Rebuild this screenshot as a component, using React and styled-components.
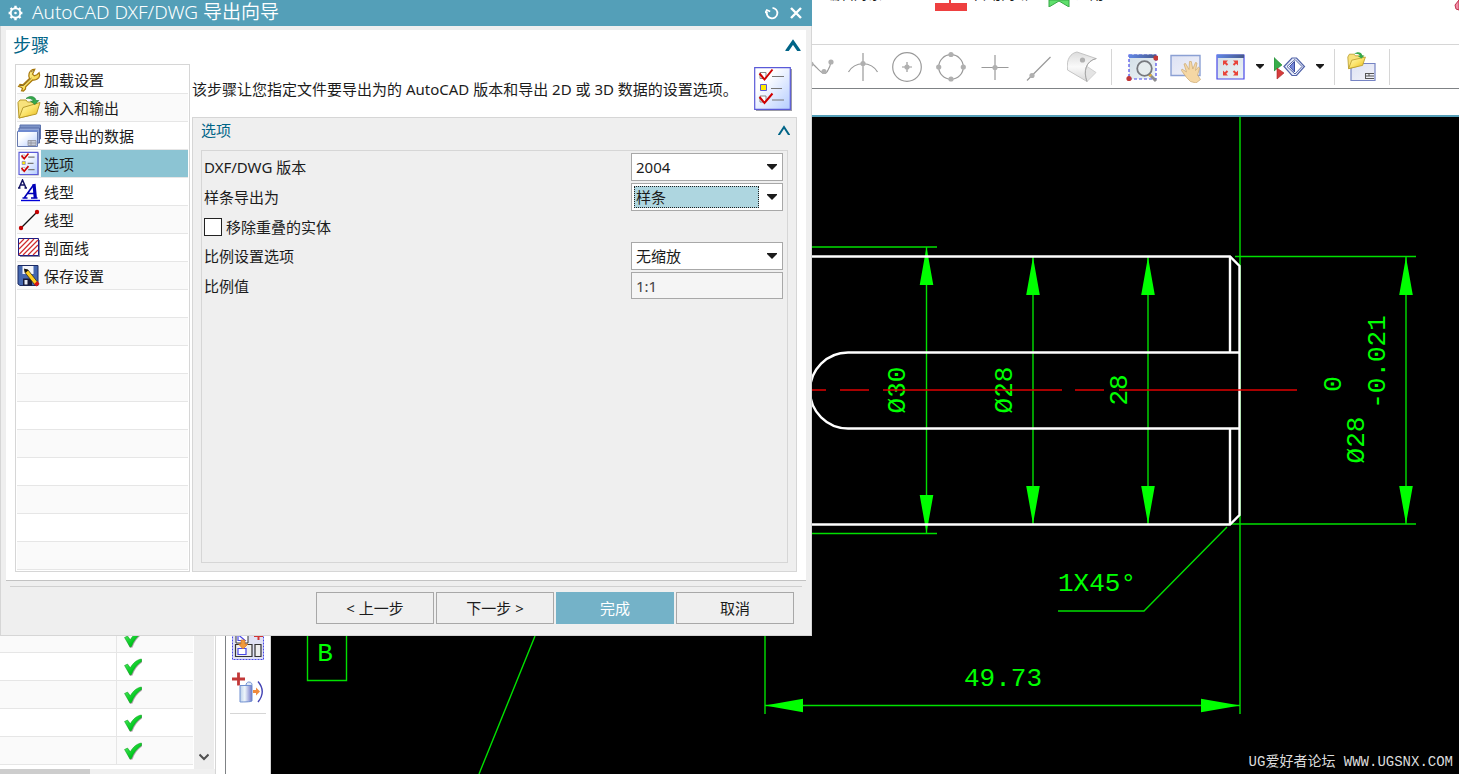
import React from "react";
import styled, { createGlobalStyle, css } from "styled-components";

const ui = '"Noto Sans", "Noto Sans CJK SC", sans-serif';
const teal = "#549fb8";
const heading = "#006487";

const Global = createGlobalStyle`
  *, *::before, *::after { box-sizing: border-box; }
  body { margin: 0; background: #fff; color: #1c1c1c; font: 15px/20px ${ui}; }
  button, input, select { font: inherit; color: inherit; }
  svg { display: block; flex: none; }
`;

/* ---------- application frame ---------- */

const App_ = styled.div`
  position: relative;
  display: flex;
  flex-direction: column;
  height: 100vh;
  min-height: 640px;
  overflow: hidden;
`;

const Ribbon = styled.header`
  display: flex;
  align-items: flex-start;
  height: 44px;
  padding-left: 826px;
  overflow: hidden;
  flex: none;
`;

const RibbonItem = styled.button`
  display: flex;
  align-items: flex-start;
  gap: 6px;
  padding: 0;
  margin-right: ${(p) => p.$after || 0}px;
  border: 0;
  background: none;
  font-size: 14px;
  white-space: nowrap;
  flex: none;
  span { margin-top: -16px; }
`;

const RibbonEnd = styled.div`
  margin-left: auto;
`;

const Toolbar = styled.div`
  display: flex;
  align-items: center;
  height: 45px;
  padding-left: 797px;
  border-top: 1px solid #d6d6d6;
  border-bottom: 1px solid #7f8285;
  flex: none;
`;

const ToolGroup = styled.div`
  display: flex;
  align-items: center;
  padding-left: ${(p) => p.$lead || 0}px;
`;

const Tool = styled.button`
  display: grid;
  place-items: center;
  width: ${(p) => (p.$narrow ? 16 : 44)}px;
  height: 44px;
  padding: 0;
  border: 0;
  background: none;
  flex: none;
`;

const Divider = styled.div`
  width: 1px;
  height: 36px;
  margin: 0 4px 0 6px;
  background: #d6d6d6;
  flex: none;
`;

const Workspace = styled.div`
  display: flex;
  flex: 1;
  min-height: 0;
`;

const TreePanel = styled.aside`
  display: flex;
  flex-direction: column;
  width: 216px;
  border-right: 1px solid #d6d6d6;
  flex: none;
`;

const TreeBody = styled.div`
  display: flex;
  flex: 1;
  min-height: 0;
`;

const TreeClip = styled.div`
  display: flex;
  flex-direction: column;
  justify-content: flex-end;
  width: 194px;
  padding-bottom: 4px;
  overflow: hidden;
`;

const TreeTable = styled.table`
  width: 193px;
  border-collapse: separate;
  border-spacing: 0;
  table-layout: fixed;
  flex: none;
  td { height: 28px; padding: 0; border-bottom: 1px solid #e6e6e6; }
  td:first-child { width: 117px; border-right: 1px solid #e6e6e6; }
  td:last-child { padding-left: 6px; }
  tr:nth-child(even) td { background: #fafafa; }
`;

const VScroll = styled.div`
  display: flex;
  align-items: flex-end;
  justify-content: center;
  width: 20px;
  padding-bottom: 7px;
  background: #ededed;
`;

const HScroll = styled.div`
  height: 5px;
  background: #f0f0f0;
  flex: none;
`;

const HThumb = styled.div`
  width: 90px;
  height: 5px;
  background: #cdcdcd;
`;

const SideTools = styled.div`
  display: flex;
  flex-direction: column;
  justify-content: flex-end;
  width: 46px;
  margin-left: 9px;
  padding: 0 0 60px;
  border-left: 1px solid #7f8285;
  border-right: 1px solid #d6d6d6;
  overflow: hidden;
  flex: none;
`;

const SideRule = styled.div`
  height: 1px;
  margin: 3px 4px 0;
  background: #d6d6d6;
  flex: none;
`;

const Viewport = styled.main`
  display: flex;
  flex-direction: column;
  flex: 1;
  min-width: 0;
`;

const ViewTabs = styled.div`
  height: 28px;
  border-bottom: 2px solid ${teal};
  flex: none;
`;

const Canvas = styled.div`
  flex: 1;
  min-height: 0;
  background: #000;
  > svg { width: 100%; height: 100%; }
`;

/* ---------- dialog ---------- */

const Dialog = styled.section`
  position: absolute;
  top: 0;
  left: 0;
  width: min(812px, 100%);
  border: 1px solid #d6d6d6;
  border-top: 0;
  background: #efefef;
`;

const TitleBar = styled.header`
  display: flex;
  align-items: center;
  height: 26px;
  margin: 0 -1px;
  padding: 0 4px 0 8px;
  background: ${teal};
  color: #fff;
`;

const Title = styled.h1`
  flex: 1;
  margin: 0 0 0 9px;
  font-size: 19px;
  line-height: 24px;
  padding-bottom: 2px;
  font-weight: 350;
`;

const BarButton = styled.button`
  display: grid;
  place-items: center;
  width: 24px;
  height: 24px;
  padding: 0;
  border: 0;
  background: none;
`;

const Panel = styled.div`
  margin: 4px 5px 0;
  padding: 0 9px 8px;
  border-bottom: 1px solid #c2c2c2;
  background: #fff;
`;

const PanelHead = styled.div`
  display: flex;
  align-items: center;
  justify-content: space-between;
  height: 34px;
  margin: 0 -4px 0 -2px;
  padding-bottom: 5px;
`;

const PanelTitle = styled.h2`
  margin: 0;
  color: ${heading};
  font-size: ${(p) => (p.$small ? 15 : 18)}px;
  line-height: 24px;
  font-weight: 400;
`;

const Fold = styled.button`
  padding: 0;
  border: 0;
  background: none;
`;

const Columns = styled.div`
  display: flex;
  gap: 2px;
`;

const StepList = styled.ol`
  width: 175px;
  margin: 0;
  padding: 1px;
  border: 1px solid #d6d6d6;
  list-style: none;
  flex: none;
`;

const Step = styled.li`
  height: 28px;
  border-bottom: 1px solid #e6e6e6;
  background: ${(p) => (p.$alt ? "#fafafa" : "#fff")};
`;

const StepButton = styled.button`
  display: flex;
  align-items: center;
  width: 100%;
  height: 27px;
  padding: 0;
  border: 0;
  background: none;
  text-align: left;
  span {
    flex: 1;
    padding: 2px 0 0 3px;
    line-height: 25px;
    ${(p) => p.$current && css`background: #8cc4d3;`}
  }
`;

const Detail = styled.div`
  display: flex;
  flex-direction: column;
  flex: 1;
  min-width: 0;
`;

const Intro = styled.div`
  display: flex;
  align-items: center;
  justify-content: space-between;
  height: 53px;
  padding: 0 5px 4px 0;
  p { margin: 0; white-space: nowrap; }
`;

const Options = styled.div`
  display: flex;
  flex-direction: column;
  flex: 1;
  padding: 0 8px 8px;
  border: 1px solid #d6d6d6;
  background: #efefef;
`;

const OptionsHead = styled.div`
  display: flex;
  align-items: center;
  justify-content: space-between;
  height: 32px;
  margin-right: -2px;
  padding-bottom: 8px;
`;

const Fields = styled.div`
  display: flex;
  flex-direction: column;
  gap: 2px;
  flex: 1;
  padding: 2px 4px 2px 2px;
  border: 1px solid #d6d6d6;
`;

const Field = styled.div`
  display: flex;
  align-items: center;
  justify-content: space-between;
  height: ${(p) => (p.$tight ? 27 : 28)}px;
`;

const SelectBox = styled.div`
  display: flex;
  align-items: center;
  width: 152px;
  height: 28px;
  padding: 2px 5px 2px 2px;
  border: 1px solid #a8a8a8;
  background: #fff;
`;

const Select = styled.select`
  appearance: none;
  flex: 1;
  min-width: 0;
  height: 22px;
  margin-right: 8px;
  padding: 0 1px;
  border: 1px dotted ${(p) => (p.$active ? "#222" : "transparent")};
  border-radius: 0;
  background: ${(p) => (p.$active ? "#aed6e0" : "#fff")};
  line-height: 20px;
  outline: 0;
`;

const ValueInput = styled.input`
  width: 152px;
  height: 27px;
  padding: 0 4px;
  border: 1px solid #a8a8a8;
  border-radius: 0;
  background: #f5f5f5;
  color: #444;
`;

const CheckLabel = styled.label`
  display: flex;
  align-items: center;
  gap: 4px;
`;

const Check = styled.input`
  appearance: none;
  width: 18px;
  height: 18px;
  margin: 0;
  border: 1px solid #222;
  background: #fff;
`;

const Footer = styled.footer`
  display: flex;
  justify-content: flex-end;
  gap: 2px;
  margin: 5px 9px 0;
  padding: 5px 8px 11px 0;
  border-top: 1px solid #d0d0d0;
`;

const Button = styled.button`
  width: 118px;
  height: 32px;
  padding: 0;
  border: 1px solid ${(p) => (p.$primary ? "#74b2c8" : "#a8a8a8")};
  background: ${(p) => (p.$primary ? "#74b2c8" : "#efefef")};
  color: ${(p) => (p.$primary ? "#fff" : "#1c1c1c")};
`;

/* ---------- icons ---------- */

const Gear = () => (
  <svg width="15" height="16" viewBox="0 0 15 16" fill="none" stroke="#fff">
    <circle cx="7.500" cy="8" r="4.800" strokeWidth="2" />
    <circle cx="7.500" cy="8" r="1.300" fill="#fff" stroke="none" />
    <path strokeWidth="2.400" d="M7.500 .8V3M7.500 13v2.200M.6 8h2M12.400 8h2M2.600 3l1.500 1.500M11 11.500l1.500 1.500M12.500 3 11 4.500M4 11.500 2.500 13" />
  </svg>
);

const Reset = () => (
  <svg width="14" height="14" viewBox="0 0 14 14" fill="none" stroke="#fff" strokeWidth="1.800">
    <path d="M7.500 1.800A5.300 5.300 0 1 1 2 5.500" />
    <path d="M0 7 1.800 4 5.200 5.500" strokeWidth="1.500" />
  </svg>
);

const Close = () => (
  <svg width="12" height="12" viewBox="0 0 12 12" stroke="#fff" strokeWidth="2.400">
    <path d="M1 1l10 10M11 1 1 11" />
  </svg>
);

const Chevron = ({ small }) => small ? (
  <svg width="12" height="10" viewBox="0 0 12 10" fill="none" stroke={heading} strokeWidth="2">
    <path d="M.5 10.500 6 2l5.500 8.500" />
  </svg>
) : (
  <svg width="16" height="12" viewBox="0 0 16 12" fill="none" stroke={heading} strokeWidth="3.200">
    <path d="M1.500 12.500 8 3l6.500 9.500" />
  </svg>
);

const Caret = ({ small }) => (
  <svg width={small ? 8 : 10} height={small ? 5 : 6} viewBox="0 0 10 6" fill="#1c1c1c">
    <path d="M0 0h10v1L5 6 0 1z" />
  </svg>
);

const Defs = () => (
  <svg width="0" height="0" style={{ position: "absolute" }} aria-hidden="true">
    <defs>
      <linearGradient id="gold" x1="0" y1="0" x2="1" y2="1">
        <stop offset="0" stopColor="#fffbc0" />
        <stop offset=".5" stopColor="#fbe36a" />
        <stop offset="1" stopColor="#e6b410" />
      </linearGradient>
      <linearGradient id="sheet" x1="0" y1="0" x2="1" y2="1">
        <stop offset=".3" stopColor="#fff" />
        <stop offset="1" stopColor="#b4ccff" />
      </linearGradient>
      <linearGradient id="paper" x1="0" y1="0" x2="1" y2="1">
        <stop offset="0" stopColor="#dde2f4" />
        <stop offset="1" stopColor="#f2f2f8" />
      </linearGradient>
      <linearGradient id="win" x1="0" y1="0" x2="1" y2="1">
        <stop offset="0" stopColor="#d2dee6" />
        <stop offset="1" stopColor="#eef4f6" />
      </linearGradient>
      <linearGradient id="bluebar" x1="0" y1="0" x2="1" y2="0">
        <stop offset="0" stopColor="#5f86e4" />
        <stop offset="1" stopColor="#46598c" />
      </linearGradient>
      <linearGradient id="tick" x1="0" y1="0" x2="1" y2="1">
        <stop offset="0" stopColor="#5df06a" />
        <stop offset=".6" stopColor="#00c81e" />
        <stop offset="1" stopColor="#0aa018" />
      </linearGradient>
      <linearGradient id="tube" x1="0" y1="0" x2="1" y2="0">
        <stop offset="0" stopColor="#bcd0ea" />
        <stop offset=".4" stopColor="#eef6fb" />
        <stop offset="1" stopColor="#6d74c8" />
      </linearGradient>
      <linearGradient id="grey" x1="0" y1="0" x2="0" y2="1">
        <stop offset="0" stopColor="#dcdcdc" />
        <stop offset=".5" stopColor="#fafafa" />
        <stop offset="1" stopColor="#d8d8d8" />
      </linearGradient>
    </defs>
  </svg>
);

const stepSvg = { width: 24, height: 26, viewBox: "0 0 24 26" };

const Wrench = () => (
  <svg {...stepSvg}>
    <path d="M1.500 19.500 3 17.500l3 .3 6.500-6.300c-1.500-3.500-.4-7.500 3-9l2.300-.3-1 2.300-1.300 2.700 1.800 1.500 2.600-1 2.200-2 .6 2.500c-.4 3.300-3.600 5.300-7 4.800l-7 6.800-.2 2.200-2 2-2-.3 1-2.300-1.500-1.200z" fill="url(#gold)" stroke="#a8780c" strokeWidth="1.200" />
    <path d="M3 18.500h3.500l8-7.500M14 5l3-2" stroke="#6e5624" strokeWidth=".8" fill="none" />
  </svg>
);

const Folder = ({ ...rest }) => (
  <svg {...stepSvg} {...rest}>
    <path d="M1 7.500 3 5h6l1.500 2H19v4L14 20 2 23z" fill="#f8e27c" stroke="#b89a2a" />
    <path d="M6 12.500 23 7.500 19.500 19 2 23z" fill="url(#gold)" stroke="#b89a2a" />
    <path d="M9 3.500C13 0 18.500 1.500 19 5.500h2.800L18 9.500l-4.500-3.300h2.700C15.500 3.800 12.500 3 9 3.500z" fill="#35a94c" stroke="#1a7d31" strokeWidth=".6" />
  </svg>
);

const Sheets = () => (
  <svg {...stepSvg}>
    <path d="M3 2h20.500v14H3z" fill="#7c93c6" stroke="#5d74ae" />
    <path d="M2 5h20.500v15H2z" fill="#91a6d6" stroke="#5468a4" />
    <path d="M.5 8.500h20V23.500H.5z" fill="url(#sheet)" stroke="#6579ae" />
    <path d="M1 8h20" stroke="#6f8ad0" strokeWidth="2" />
    <path d="M11 17.500h8v5h-8zM11 20h8M14 17.500v5" fill="#c6cbd8" stroke="#8d8f9a" strokeWidth=".8" />
  </svg>
);

const Checklist = ({ large }) => (
  <svg width={large ? 38 : 24} height={large ? 44 : 26} viewBox={large ? "0 0 38 44" : "-3 -2 45 49"}>
    <path d="M2 2h36v42H2z" fill="#9a9aa6" />
    <path d="M.7.700h35.600v41.600H.7z" fill="url(#sheet)" stroke="#5a5ad8" strokeWidth={large ? 1.2 : 2.2} />
    <path d="M6 5.500h6v6H6zM6 29h6v6H6z" fill="#fff" stroke="#888" />
    <path d="M6.500 17.500h6v6h-6z" fill="#ffea00" stroke="#5a5ad8" />
    <path d="M18 9.500h12M17 21.500h11M18 33h12" stroke="#777" strokeWidth={large ? 1.2 : 2.4} />
    <path d="M5.500 6.500 10.500 12.500 18.500 2.500M5.500 30l5 6 8-9.500" fill="none" stroke="#d00000" strokeWidth={large ? 2 : 3} />
  </svg>
);

const Fonts = () => (
  <svg {...stepSvg}>
    <path d="M2 9 5.500 1 9 9M3.300 6h4.500M1 9h2.500M7.500 9H10" fill="none" stroke="#141464" strokeWidth="1.500" />
    <path d="M7.500 18.500 16.500 6M10.500 14.500h7.500M5.500 19h5M14 19h6.500" fill="none" stroke="#0000b8" strokeWidth="1.600" />
    <path d="M17 5l1.300 14" stroke="#0000b8" strokeWidth="3.200" />
    <path d="M4 21.500h19" stroke="#0000d8" strokeWidth="1.400" />
  </svg>
);

const LineType = () => (
  <svg {...stepSvg}>
    <path d="M4 21 20 5" stroke="#111" strokeWidth="1.200" />
    <circle cx="4" cy="21" r="2.200" fill="#c40000" />
    <circle cx="20" cy="5" r="2.200" fill="#c40000" />
  </svg>
);

const Hatch = () => (
  <svg {...stepSvg}>
    <path d="M3 5h20v17H3z" fill="#8c8ca0" />
    <path d="M1.500 3.500h20v17h-20z" fill="#fff" stroke="#1c1c84" />
    <path d="M2 9l5-5M2 14 12 4M2 19.500 17 4M6 20 21 5M11 20 21 10M16 20l5-5" stroke="#d02c2c" strokeWidth="1.200" />
  </svg>
);

const Save = () => (
  <svg {...stepSvg}>
    <path d="M1 2.500h20V22.500H3L1 21z" fill="#4567ae" stroke="#1b2a64" />
    <path d="M5.500 3h11v8h-11z" fill="#f4f6fb" />
    <path d="M6 15.500h9v7H6z" fill="#161a38" />
    <path d="M7.500 17h3v4.500h-3z" fill="#e8ecf4" />
    <path d="M7.500 6.500 11 7l9.500 12-3 2.500L8 9.500z" fill="#ffce1e" stroke="#3a3010" strokeWidth=".8" />
    <path d="M7 5.500 11.500 7 8.500 10z" fill="#111" />
    <path d="m17 21 3.500-3 2 3-3 2.500z" fill="#d81414" />
  </svg>
);

const Tick = () => (
  <svg width="20" height="20" viewBox="0 0 20 20">
    <path d="M2.500 9.500 5 8l2.800 3.500C11 6.500 15 3.500 19 3v2.500C14.500 8.500 11.500 13 9.500 18.500L7 19z" fill="#b9a9b4" />
    <path d="M1.500 8.500 4.500 7l2.800 3.800C10 6 14 2.500 18.500 2v2.500C14 7.500 10.500 12 8.500 17.500L7 18z" fill="url(#tick)" stroke="#0a9a1c" strokeWidth=".5" />
  </svg>
);

const g = { fill: "none", stroke: "#9a9a9a", strokeWidth: 1.2 };
const tool = { width: 32, height: 32, viewBox: "0 0 32 32" };
const Dot = ({ x, y, c = "#b0b0b0" }) => <circle cx={x} cy={y} r="2.600" fill={c} stroke="none" />;

const Spline = () => (
  <svg {...tool} {...g}><path d="M1 22C4 8 8 11 12 15s10 12 13 4q2-3 3-8" /><Dot x={8} y={13} /><Dot x={21} y={20.500} /><Dot x={28} y={11} /></svg>
);
const ArcMid = () => (
  <svg {...tool} {...g}><path d="M1.500 21C8 10 24 10 30.500 21M16 2v28" /><Dot x={16} y={12.500} /></svg>
);
const CircleCentre = () => (
  <svg {...tool} {...g}><circle cx="16" cy="16" r="14.300" /><path d="M16 11v10M11 16h10" /><Dot x={16} y={16} /></svg>
);
const Quadrant = () => (
  <svg {...tool} {...g}><circle cx="16" cy="16" r="12.300" /><Dot x={16} y={3.500} /><Dot x={28.300} y={16} /><Dot x={16} y={28} /><Dot x={3.700} y={16} /></svg>
);
const Cross = () => (
  <svg {...tool} {...g}><path d="M16 4v25M2.500 16.500h27" /><Dot x={16} y={16.500} /></svg>
);
const LineEnd = () => (
  <svg {...tool} {...g}><path d="M4 29.500 27.500 6" /><Dot x={9} y={24.500} /></svg>
);
const Surface = () => (
  <svg {...tool}>
    <path d="M18 14 29 21.500 20 30.500 17 22z" fill="#e4e4e4" stroke="#c8c8c8" strokeWidth=".8" />
    <path d="M10 1C4 2-1 8 .5 19L20 30.500C16 20 19 10 29 7.500z" fill="url(#grey)" stroke="#c4c4c4" />
    <path d="M29.500 7.500C19 10 16 20 20 30.500" fill="none" stroke="#a6a6a6" />
    <Dot x={15.500} y={9} />
  </svg>
);

const WindowFrame = ({ dashed }) => (
  <>
    <path d="M3 4h27v24H3z" fill="url(#win)" stroke="#4848e8" strokeWidth="1.200" strokeDasharray={dashed ? "3 2" : "none"} />
    <path d="M3 3.500h27V7H3z" fill="url(#bluebar)" />
  </>
);

const ZoomArea = () => (
  <svg {...tool}>
    <WindowFrame dashed />
    <path d="m22 22 8 8" stroke="#8d8d90" strokeWidth="3" />
    <path d="m22 22 3 3" stroke="#e8b43a" strokeWidth="3" />
    <circle cx="18.500" cy="17.500" r="7.300" fill="#e6ecee" stroke="#77797e" strokeWidth="1.800" />
    <Dot x={3} y={27.500} c="#c23838" /><Dot x={30} y={7} c="#c23838" />
  </svg>
);
const Pan = () => (
  <svg {...tool}>
    <path d="M1 4.500h29v20H1z" fill="url(#paper)" stroke="#8ba0d4" strokeWidth="1.400" />
    <path d="M12 18l4.500 3-2.500-8 1.500-.5 3.500 6 .5-8h1.800l1.500 7.500 2.700-6.500 1.500.5-1.500 7.500 3-3.500 1.200 1-2.200 7 3 4.500-4.500 3.500-5.500-1.500-4-4-5-7z" fill="#f5d7a4" stroke="#cfae7a" strokeWidth=".8" />
  </svg>
);
const Fit = () => (
  <svg {...tool}>
    <WindowFrame />
    <g fill="none" stroke="#e8443a" strokeWidth="2"><path d="m13.500 14-3-3M19.500 14l3-3M13.500 20l-3 3M19.500 20l3 3" /></g>
    <path d="M9 9.500h5l-5 5zM24 9.500h-5l5 5zM9 24.500h5l-5-5zM24 24.500h-5l5-5z" fill="#e8443a" />
  </svg>
);
const Orient = () => (
  <svg {...tool}>
    <path d="M0 6.500 8 14 0 20z" fill="#37ad49" stroke="#218535" strokeWidth=".6" />
    <path d="m3 17 7 5-7 6z" fill="#d63c3c" stroke="#a82424" strokeWidth=".6" />
    <path d="M10 15.500 18 7h4.500L30.500 15.500 22.500 24.500H18z" fill="#e8ecf8" stroke="#5062a8" strokeWidth="1.200" />
    <path d="M13 15.500 21 8.500 28 15.500 21 23z" fill="#fff" stroke="#5062a8" />
    <path d="M20.500 10.500v10.500L15.500 15.500z" fill="#7486d8" stroke="#3e4ea0" />
  </svg>
);
const OpenSheet = () => (
  <svg {...tool}>
    <path d="M6 12.500h24v17H6z" fill="url(#paper)" stroke="#7684c4" strokeWidth="1.200" />
    <path d="M20.500 22.500h8.500M20.500 25h8.500M20.500 27.500h8.500M20.500 22v6M24 22.500v2.500" stroke="#555" />
    <g transform="translate(2 0) scale(.8)"><path d="M1 7.500 3 4h6l1.500 2H20v4L14 19 2 22z" fill="#f8e27c" stroke="#b89a2a" /><path d="M6 11.500 23 7.500 19.500 18 2 22z" fill="url(#gold)" stroke="#b89a2a" /><path d="M9 3.500C13 0 18.500 1.500 19 5.500h2.800L18 9.500l-4.500-3.300h2.700C15.500 3.800 12.500 3 9 3.500z" fill="#35a94c" /></g>
  </svg>
);

const Pattern = () => (
  <svg width="34" height="34" viewBox="0 0 34 34">
    <path d="M1.500 1.500h31v31h-31z" fill="#e0e2f4" stroke="#4848e8" strokeDasharray="2 1" />
    <path d="M5 5h12v11H5z" fill="#fff" stroke="#333" />
    <path d="M7 7.500v6h7z" fill="none" stroke="#4848e8" strokeWidth="1.200" />
    <path d="M23 9h9M27.500 4v9" stroke="#d03434" strokeWidth="2" />
    <path d="M4.500 17.500H21v12H4.500zM24 17.500h6v12h-6z" fill="#eee" stroke="#333" strokeWidth="1.200" />
    <path d="M7 21.500h8v6H7z" fill="#fff" stroke="#4848e8" strokeWidth="1.200" />
    <path d="M10 13h4v4h3l-5 5-4.500-5H10z" fill="#f09a3c" stroke="#c96a18" strokeWidth=".6" />
  </svg>
);
const Offset = () => (
  <svg width="34" height="34" viewBox="0 0 34 34">
    <path d="M1 8h13M7.500 1.500v13" stroke="#c23838" strokeWidth="2.800" />
    <path d="M9 14.500h12V30c0 1-12 1-12 1z" fill="url(#tube)" stroke="#6f8fd0" />
    <path d="M15 14.500c0-5 6-4 6-1v1z" fill="#dfe9f6" stroke="#6f8fd0" />
    <path d="M22 19h3v-2.500l4 4-4 4V22h-3z" fill="#f08a3c" />
    <path d="M27 10.500q8.500 10 0 20.500" fill="none" stroke="#4444b4" strokeWidth="1.400" />
  </svg>
);

/* ---------- drawing ---------- */

const cadFont = { fontFamily: '"Liberation Mono", monospace', fontSize: 26, fill: "#00ff00", textAnchor: "middle" };

const VDim = ({ x, y1, y2 }) => (
  <g>
    <path d={`M${x} ${y1}V${y2}`} stroke="#00e000" strokeWidth="1.400" />
    <path d={`M${x} ${y1}l6.800 38h-13.600zM${x} ${y2}l6.800-38h-13.600z`} fill="#0f0" />
  </g>
);

const Upright = ({ x, y, children }) => (
  <text {...cadFont} transform={`translate(${x} ${y}) rotate(-90)`}>{children}</text>
);

const Drawing = () => (
  <svg viewBox="271 117 1188 657" preserveAspectRatio="xMinYMin slice">
    <g fill="none" stroke="#00e000" strokeWidth="1.400">
      <path d="M1240 117V714M765 630v84M765 705.500h475" />
      <path d="M800 247h137M800 533.500h137M1235 256.500h181M1230 524h186" />
      <path d="M1227 527l-83 84h-86M535 636 479 774" />
      <path d="M307.500 600v80.500H346.500V600" />
    </g>
    <path d="M765 705.500l38-6.800v13.600zM1240 705.500l-39-6.800v13.600z" fill="#0f0" />
    <VDim x={926.5} y1={247} y2={533} />
    <VDim x={1033} y1={257} y2={524} />
    <VDim x={1148} y1={257} y2={524} />
    <VDim x={1406} y1={257} y2={524} />
    <g fill="none" stroke="#fff" strokeWidth="2.400">
      <path d="M800 256.500h430l9.500 9.500v249l-9.500 9.500H800" />
      <path d="M1240 352.500H848a38 38 0 0 0 0 76h392M1230 256v96M1230 429v95" />
    </g>
    <Upright x={905} y={390}>Ø30</Upright>
    <Upright x={1012} y={390}>Ø28</Upright>
    <Upright x={1127} y={390}>28</Upright>
    <Upright x={1364} y={440}>Ø28</Upright>
    <Upright x={1341} y={384}>0</Upright>
    <Upright x={1385} y={362}>-0.021</Upright>
    <path d="M800 390h26M840 390h29M883 390h179M1075 390h29M1119 390h178" stroke="#e00000" strokeWidth="1.400" />
    <text {...cadFont} x="1097" y="591">1X45°</text>
    <text {...cadFont} x="1003" y="686">49.73</text>
    <text {...cadFont} x="325" y="661">B</text>
    <text x="1453" y="766" textAnchor="end" fontFamily='"Liberation Mono", "Noto Sans CJK SC", monospace' fontSize="14" fill="#dcdcdc">UG爱好者论坛 WWW.UGSNX.COM</text>
  </svg>
);

/* ---------- data ---------- */

const steps = [
  ["加载设置", Wrench],
  ["输入和输出", Folder],
  ["要导出的数据", Sheets],
  ["选项", Checklist],
  ["线型", Fonts],
  ["线型", LineType],
  ["剖面线", Hatch],
  ["保存设置", Save],
];
const blankSteps = Array.from({ length: 10 }, (_, i) => i + steps.length);

const snapTools = [["样条", Spline], ["圆弧", ArcMid], ["圆心", CircleCentre], ["象限点", Quadrant], ["交点", Cross], ["端点", LineEnd], ["面上的点", Surface]];
const viewTools = [["缩放", ZoomArea], ["平移", Pan], ["适合窗口", Fit]];

const ToolButton = ({ label, icon: Icon }) => (
  <Tool type="button" aria-label={label}><Icon /></Tool>
);

const Dropdown = ({ id, label, value, active }) => (
  <Field>
    <label htmlFor={id}>{label}</label>
    <SelectBox>
      <Select id={id} $active={active} defaultValue={value}><option>{value}</option></Select>
      <Caret />
    </SelectBox>
  </Field>
);

export default function App() {
  return (
    <App_>
      <Global />
      <Defs />
      <Ribbon>
        <RibbonItem type="button" $after={53}><span>编辑对象</span></RibbonItem>
        <RibbonItem type="button" $after={19}>
          <svg width="32" height="11" viewBox="0 0 32 11" fill="#ee4040"><path d="M0 3h14V0h2v3h16v8H0z" /></svg>
          <span>自动判断</span>
        </RibbonItem>
        <RibbonItem type="button">
          <svg width="22" height="7" viewBox="0 0 22 7"><path d="M1 0h20v7l-10-6-10 6z" fill="#5fe06c" stroke="#37a846" /></svg>
          <span>适用</span>
        </RibbonItem>
        <RibbonEnd>
          <svg width="5" height="11" viewBox="0 0 5 11"><path d="M5 0 1 5l1 4 3 1z" fill="#f090a8" stroke="#c0304c" /></svg>
        </RibbonEnd>
      </Ribbon>

      <Toolbar>
        <ToolGroup>{snapTools.map(([l, I]) => <ToolButton key={l} label={l} icon={I} />)}</ToolGroup>
        <Divider />
        <ToolGroup $lead={4}>
          {viewTools.map(([l, I]) => <ToolButton key={l} label={l} icon={I} />)}
          <Tool type="button" $narrow aria-label="更多缩放"><Caret small /></Tool>
          <ToolButton label="定向" icon={Orient} />
          <Tool type="button" $narrow aria-label="更多定向"><Caret small /></Tool>
        </ToolGroup>
        <Divider />
        <ToolGroup><ToolButton label="打开图纸" icon={OpenSheet} /></ToolGroup>
        <Divider />
      </Toolbar>

      <Workspace>
        <TreePanel>
          <TreeBody>
            <TreeClip>
              <TreeTable>
                <tbody>
                  {Array.from({ length: 24 }, (_, i) => (
                    <tr key={i}><td /><td><Tick /></td></tr>
                  ))}
                </tbody>
              </TreeTable>
            </TreeClip>
            <VScroll>
              <svg width="10" height="10" viewBox="0 0 10 10" fill="none" stroke="#505050" strokeWidth="2"><path d="M.5 2.500 5 7l4.500-4.500" /></svg>
            </VScroll>
          </TreeBody>
          <HScroll><HThumb /></HScroll>
        </TreePanel>
        <SideTools>
          <ToolButton label="阵列" icon={Pattern} />
          <ToolButton label="偏置" icon={Offset} />
          <SideRule />
        </SideTools>
        <Viewport>
          <ViewTabs />
          <Canvas><Drawing /></Canvas>
        </Viewport>
      </Workspace>

      <Dialog role="dialog" aria-labelledby="dialog-title">
        <TitleBar>
          <Gear />
          <Title id="dialog-title">AutoCAD DXF/DWG 导出向导</Title>
          <BarButton type="button" aria-label="重置"><Reset /></BarButton>
          <BarButton type="button" aria-label="关闭"><Close /></BarButton>
        </TitleBar>
        <Panel>
          <PanelHead>
            <PanelTitle>步骤</PanelTitle>
            <Fold type="button" aria-label="折叠步骤"><Chevron /></Fold>
          </PanelHead>
          <Columns>
            <StepList>
              {steps.map(([label, Icon], i) => (
                <Step key={i} $alt={i % 2 === 1}>
                  <StepButton type="button" $current={i === 3}><Icon /><span>{label}</span></StepButton>
                </Step>
              ))}
              {blankSteps.map((i) => <Step key={i} $alt={i % 2 === 1} />)}
            </StepList>
            <Detail>
              <Intro>
                <p>该步骤让您指定文件要导出为的 AutoCAD 版本和导出 2D 或 3D 数据的设置选项。</p>
                <Checklist large />
              </Intro>
              <Options>
                <OptionsHead>
                  <PanelTitle as="h3" $small>选项</PanelTitle>
                  <Fold type="button" aria-label="折叠选项"><Chevron small /></Fold>
                </OptionsHead>
                <Fields>
                  <Dropdown id="version" label="DXF/DWG 版本" value="2004" />
                  <Dropdown id="spline" label="样条导出为" value="样条" active />
                  <Field $tight>
                    <CheckLabel><Check type="checkbox" />移除重叠的实体</CheckLabel>
                  </Field>
                  <Dropdown id="scale" label="比例设置选项" value="无缩放" />
                  <Field $tight>
                    <label htmlFor="ratio">比例值</label>
                    <ValueInput id="ratio" defaultValue="1:1" readOnly />
                  </Field>
                </Fields>
              </Options>
            </Detail>
          </Columns>
        </Panel>
        <Footer>
          <Button type="button">&lt; 上一步</Button>
          <Button type="button">下一步 &gt;</Button>
          <Button type="button" $primary>完成</Button>
          <Button type="button">取消</Button>
        </Footer>
      </Dialog>
    </App_>
  );
}
